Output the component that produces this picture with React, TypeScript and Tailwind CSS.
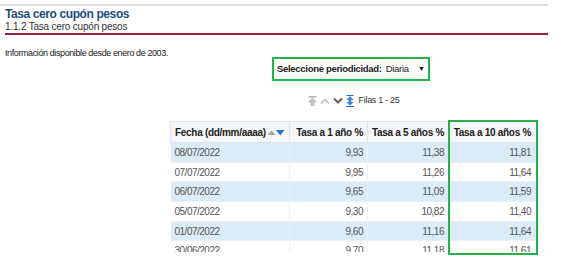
const rows = [
  ['08/07/2022', '9,93', '11,38', '11,81'],
  ['07/07/2022', '9,95', '11,26', '11,64'],
  ['06/07/2022', '9,65', '11,09', '11,59'],
  ['05/07/2022', '9,30', '10,82', '11,40'],
  ['01/07/2022', '9,60', '11,16', '11,64'],
  ['30/06/2022', '9,70', '11,18', '11,61'],
];

function PagerIcons() {
  return (
    <div className="flex items-center gap-[3px]">
      {/* primera página */}
      <svg width="9" height="10" viewBox="0 0 9 10">
        <rect x="0.5" y="0" width="8" height="1.6" fill="#b5b5b5" />
        <path d="M4.5 2 L8.5 6 L6 6 L6 10 L3 10 L3 6 L0.5 6 Z" fill="#c4c4c4" stroke="#a9a9a9" strokeWidth="0.6" />
      </svg>
      {/* anterior */}
      <svg width="10" height="8" viewBox="0 0 10 8">
        <path d="M1 6.5 L5 2.5 L9 6.5" fill="none" stroke="#c9c9c9" strokeWidth="2" />
      </svg>
      {/* siguiente */}
      <svg width="10" height="8" viewBox="0 0 10 8">
        <path d="M1 1.5 L5 5.5 L9 1.5" fill="none" stroke="#5f5f5f" strokeWidth="2" />
      </svg>
      {/* todas las filas */}
      <svg width="8" height="12" viewBox="0 0 8 12">
        <rect x="0.5" y="0" width="7" height="1" fill="#1f6fc5" />
        <path d="M4 1.5 L7 4.5 L5 4.5 L5 7.5 L7 7.5 L4 10.3 L1 7.5 L3 7.5 L3 4.5 L1 4.5 Z" fill="#3a86d6" stroke="#1f6fc5" strokeWidth="0.5" />
        <rect x="0" y="11" width="8" height="1" fill="#1f6fc5" />
      </svg>
    </div>
  );
}

function SortArrows() {
  return (
    <svg width="18" height="7" viewBox="0 0 18 7" className="ml-[1px]">
      <path d="M0.5 6 L4.5 1.5 L8.5 6 Z" fill="#a3a3a3" />
      <path d="M9 1 L17.5 1 L13.25 6.5 Z" fill="#1f78d0" />
    </svg>
  );
}

export default function App() {
  return (
    <div className="w-[584px] h-[266px] overflow-hidden bg-white font-['Liberation_Sans',Arial,sans-serif]">
      <div className="mt-[4px] h-[2px] w-[548px] bg-[#dedede]"></div>

      <div className="pl-[5px] w-[548px]">
        <h1 className="mt-[1px] text-[12px] leading-[14px] font-bold tracking-[-0.4px] text-[#1f4d80]">
          Tasa cero cupón pesos
        </h1>
        <h2 className="text-[10px] leading-[12px] tracking-[-0.2px] text-[#333]">
          1.1.2 Tasa cero cupón pesos
        </h2>
        <div className="h-[2px] bg-[#a11d3d]"></div>
        <p className="mt-[13px] text-[9px] leading-[10px] tracking-[-0.4px] text-[#222]">
          Información disponible desde enero de 2003.
        </p>
      </div>

      <div className="ml-[170px] w-[367px] flex flex-col items-center">
        {/* periodicidad */}
        <div className="mt-[-1px] mr-[5px] w-[158px] h-[24px] border-2 border-[#23b24c] flex items-center pl-[3px] whitespace-nowrap">
          <span className="shrink-0 text-[9.5px] font-bold tracking-[-0.3px] text-[#222]">Seleccione periodicidad:</span>
          <div className="ml-[2px] h-[18px] flex-1 bg-[#fdfdfd] flex items-center justify-between pl-[2px] pr-[3px]">
            <span className="text-[9.5px] tracking-[-0.3px] text-[#222]">Diaria</span>
            <span className="text-[7px] text-[#111]">▼</span>
          </div>
        </div>

        {/* paginación */}
        <div className="mt-[14px] h-[12px] flex items-center gap-[5px]">
          <PagerIcons />
          <span className="text-[9px] tracking-[-0.3px] text-[#333]">Filas 1 - 25</span>
        </div>

        {/* tabla */}
        <div className="relative mt-[14px] w-[367px]">
          <div className="h-[131px] overflow-hidden">
            <table className="w-[367px] table-fixed border-collapse">
              <colgroup>
                <col className="w-[119px]" />
                <col className="w-[78px]" />
                <col className="w-[81px]" />
                <col className="w-[89px]" />
              </colgroup>
              <thead>
                <tr className="h-[21px] bg-[#f4f6f9]">
                  <th className="border border-[#dfe4ea] pl-[4px] text-left text-[10px] font-bold tracking-[-0.3px] text-[#222] whitespace-nowrap">
                    <span className="inline-flex items-center">
                      Fecha (dd/mm/aaaa)
                      <SortArrows />
                    </span>
                  </th>
                  <th className="border border-[#dfe4ea] pr-[4px] text-right text-[10px] font-bold tracking-[-0.3px] text-[#222]">Tasa a 1 año %</th>
                  <th className="border border-[#dfe4ea] pr-[4px] text-right text-[10px] font-bold tracking-[-0.3px] text-[#222]">Tasa a 5 años %</th>
                  <th className="border border-[#dfe4ea] pr-[6px] text-right text-[10px] font-bold tracking-[-0.3px] text-[#222]">Tasa a 10 años %</th>
                </tr>
              </thead>
              <tbody>
                {rows.map((r, i) => (
                  <tr key={r[0]} className={i % 2 === 0 ? 'h-[19.7px] bg-[#dcebf8]' : 'h-[19.7px] bg-white'}>
                    <td className="border-r border-b border-[#eef1f4] pl-[4px] text-[10px] tracking-[-0.5px] text-[#555]">{r[0]}</td>
                    <td className="border-r border-b border-[#eef1f4] pr-[4px] text-right text-[10px] tracking-[-0.5px] text-[#555]">{r[1]}</td>
                    <td className="border-r border-b border-[#eef1f4] pr-[4px] text-right text-[10px] tracking-[-0.5px] text-[#555]">{r[2]}</td>
                    <td className="border-r border-b border-[#eef1f4] pr-[6px] text-right text-[10px] tracking-[-0.5px] text-[#555]">{r[3]}</td>
                  </tr>
                ))}
              </tbody>
            </table>
          </div>
          {/* resaltado columna 10 años */}
          <div className="absolute left-[278px] top-[-1px] w-[90px] h-[135px] border-2 border-[#23b24c] pointer-events-none"></div>
        </div>
      </div>
    </div>
  );
}
